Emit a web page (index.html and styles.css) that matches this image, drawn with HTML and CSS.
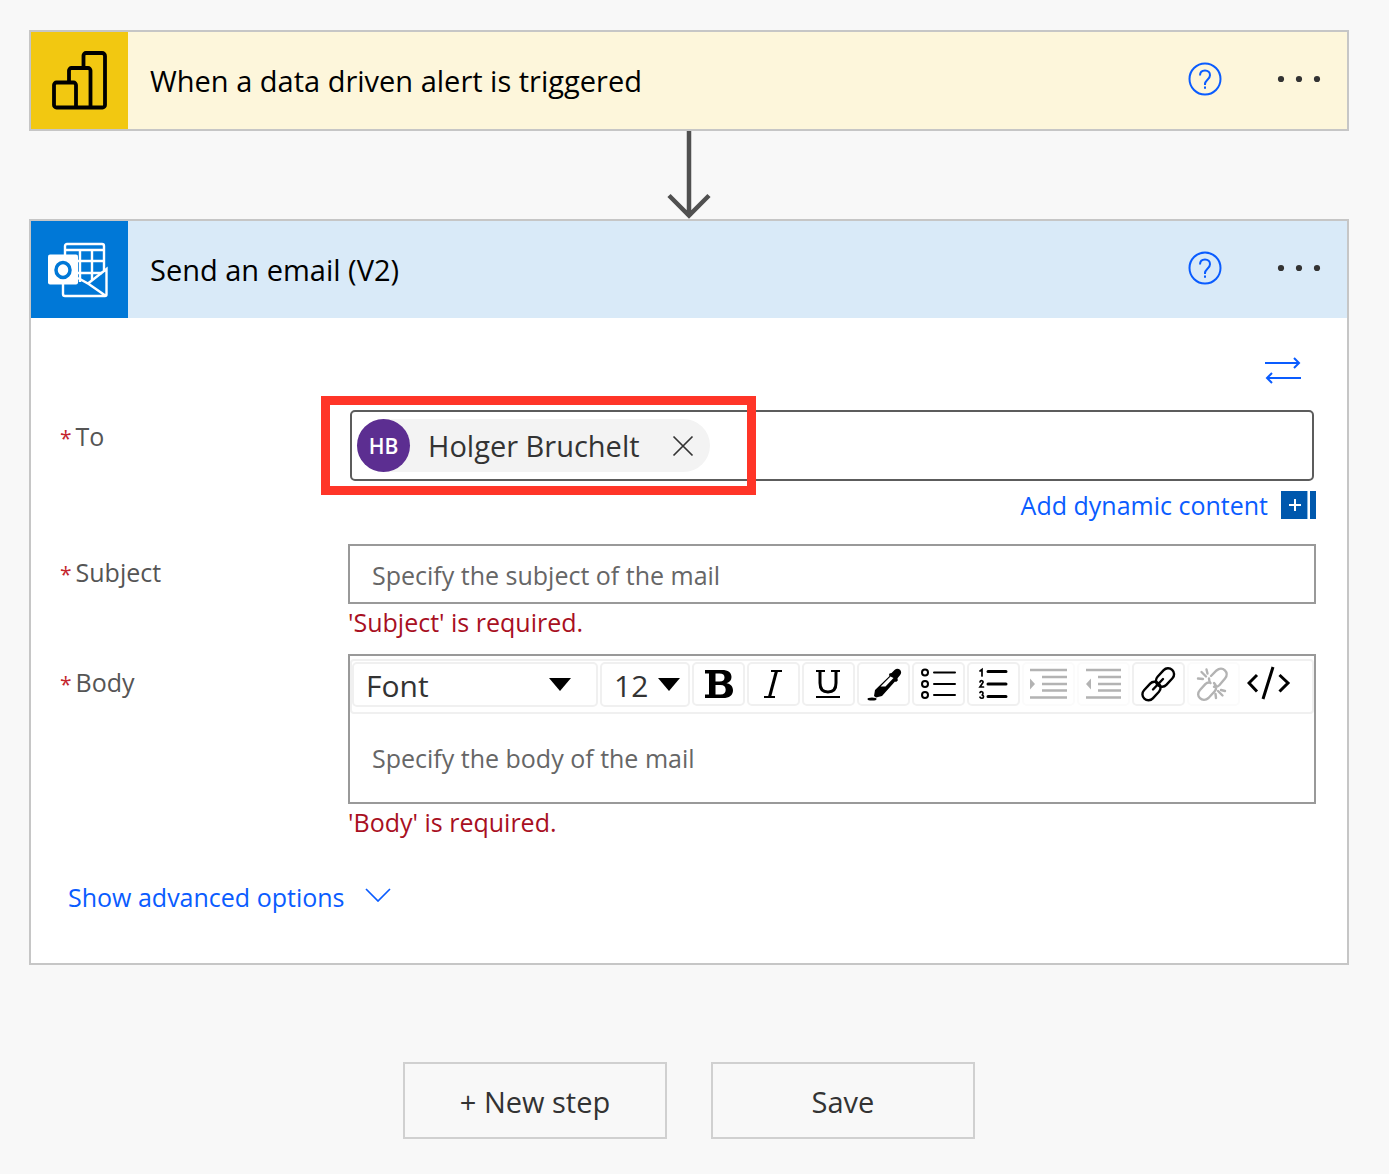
FILE: index.html
```html
<!DOCTYPE html>
<html lang="en">
<head>
<meta charset="utf-8">
<meta name="viewport" content="width=device-width, initial-scale=1">
<title>Flow designer</title>
<link rel="stylesheet" href="styles.css">
</head>
<body>
<main class="flow">
  <section class="card">
    <header class="card-header trigger">
      <span class="card-logo">
        <svg width="58" height="60" viewBox="0 0 58 60" fill="none" stroke="#000" stroke-width="3.800" aria-hidden="true">
          <path d="M32.500 15V4.500a2.500 2.500 0 0 1 2.500-2.500h16a3 3 0 0 1 3 3v49a2.500 2.500 0 0 1-2.500 2.500H5.500a2.500 2.500 0 0 1-2.500-2.500V34a2.500 2.500 0 0 1 2.500-2.500h17a2.500 2.500 0 0 1 2.500 2.500V56"/>
          <path d="M18 31V19.500a2.500 2.500 0 0 1 2.500-2.500h16.500a2.500 2.500 0 0 1 2.500 2.500V56"/>
        </svg>
      </span>
      <h2 class="card-title">When a data driven alert is triggered</h2>
      <button class="icon-button" type="button" aria-label="Help">
        <svg width="34" height="34" viewBox="0 0 34 34" fill="none" stroke="#0a5cff" stroke-width="2"><circle cx="17" cy="17" r="15.500"/><path d="M12 13.500c0-3 2-5 5-5s5 2 5 4.700c0 4.300-5 4.600-5 8.800v1"/><path d="M17 24.500v2.200"/></svg>
      </button>
      <button class="icon-button more" type="button" aria-label="More commands">
        <svg width="44" height="8" viewBox="0 0 44 8" fill="#333"><circle cx="4" cy="4" r="3.100"/><circle cx="22" cy="4" r="3.100"/><circle cx="40" cy="4" r="3.100"/></svg>
      </button>
    </header>
  </section>

  <svg class="connector" width="44" height="88" viewBox="0 0 44 88" fill="none" stroke="#505050" stroke-width="4.500" aria-hidden="true"><path d="M22 0v84M2 64.500l20 20 20-20"/></svg>

  <section class="card">
    <header class="card-header action">
      <span class="card-logo">
        <svg class="outlook" width="62" height="56" viewBox="0 0 62 56" fill="none" stroke="#fff" stroke-width="2.400" aria-hidden="true">
          <path d="M18 13V4a2 2 0 0 1 2-2h35a2 2 0 0 1 2 2v24M18 8h39M30 19h27M30 31h25M33 8v32M45 8v30"/>
          <path d="M16 41v11a2 2 0 0 0 2 2h40a1.500 1.500 0 0 0 1.500-1.500V27L41 41.500 31 36M41 41.500L59 54"/>
          <rect x="1" y="12.500" width="30" height="30" rx="2" fill="#fff" stroke="none"/>
          <ellipse cx="16" cy="28" rx="7" ry="7.500" stroke="#0078d7" stroke-width="3.500"/>
        </svg>
      </span>
      <h2 class="card-title">Send an email (V2)</h2>
      <button class="icon-button" type="button" aria-label="Help">
        <svg width="34" height="34" viewBox="0 0 34 34" fill="none" stroke="#0a5cff" stroke-width="2"><circle cx="17" cy="17" r="15.500"/><path d="M12 13.500c0-3 2-5 5-5s5 2 5 4.700c0 4.300-5 4.600-5 8.800v1"/><path d="M17 24.500v2.200"/></svg>
      </button>
      <button class="icon-button more" type="button" aria-label="More commands">
        <svg width="44" height="8" viewBox="0 0 44 8" fill="#333"><circle cx="4" cy="4" r="3.100"/><circle cx="22" cy="4" r="3.100"/><circle cx="40" cy="4" r="3.100"/></svg>
      </button>
    </header>

    <form class="card-body">
      <button class="icon-button switch" type="button" aria-label="Switch input mode">
        <svg width="38" height="28" viewBox="0 0 38 28" fill="none" stroke="#0a5cff" stroke-width="2"><path d="M1 7h34M30 2l5 5-5 5M37 22H3M8 17l-5 5 5 5"/></svg>
      </button>

      <div class="field to-field">
        <label class="label" for="to"><span class="star">*</span>To</label>
        <div class="control">
          <div class="people">
            <span class="person">
              <span class="avatar">HB</span>
              <span class="person-name">Holger Bruchelt</span>
              <button class="icon-button" type="button" aria-label="Remove Holger Bruchelt">
                <svg width="22" height="22" viewBox="0 0 22 22" fill="none" stroke="#333" stroke-width="1.700"><path d="M1.500 1.500l19 19M20.500 1.500l-19 19"/></svg>
              </button>
            </span>
            <input class="people-input" id="to" type="text">
          </div>
          <div class="highlight"></div>
          <a class="dynamic" href="#">Add dynamic content
            <svg width="35" height="28" viewBox="0 0 35 28" aria-hidden="true"><path fill="#0058ad" d="M0 0h26v28H0zM29 0h6v28h-6z"/><path fill="#8db9e0" d="M26 0h1v28h-1z"/><path d="M14 8v12M8 14h12" stroke="#fff" stroke-width="2"/></svg>
          </a>
        </div>
      </div>

      <div class="field subject-field">
        <label class="label" for="subject"><span class="star">*</span>Subject</label>
        <div class="control">
          <input class="text-input" id="subject" type="text" placeholder="Specify the subject of the mail">
          <p class="error">'Subject' is required.</p>
        </div>
      </div>

      <div class="field">
        <label class="label" for="body"><span class="star">*</span>Body</label>
        <div class="control">
          <div class="editor">
            <div class="toolbar">
              <span class="picker font-picker">
                <select class="picker-select" aria-label="Font"><option>Font</option></select>
                <svg class="caret" width="22" height="13" viewBox="0 0 22 13" aria-hidden="true"><path d="M0 0h22L11 13z"/></svg>
              </span>
              <span class="picker size-picker">
                <select class="picker-select" aria-label="Font size"><option>12</option></select>
                <svg class="caret" width="22" height="13" viewBox="0 0 22 13" aria-hidden="true"><path d="M0 0h22L11 13z"/></svg>
              </span>
              <button class="tool" type="button" aria-label="Bold">
                <svg width="44" height="40" viewBox="0 0 44 40"><path fill-rule="evenodd" d="M8 6h17c6 0 9.500 2.500 9.500 7 0 3.300-2 5.300-5 6.200 4 .7 6.500 3.200 6.500 7 0 5-3.700 7.800-10 7.800H8v-3.500h4v-21H8zM18.500 9.500v8h4c3.500 0 5-1.300 5-4s-1.500-4-5-4zM18.500 21v9.500h5c3.500 0 5.200-1.600 5.200-4.700S27 21 23.500 21z"/></svg>
              </button>
              <button class="tool" type="button" aria-label="Italic">
                <svg width="44" height="40" viewBox="0 0 44 40" fill="none" stroke="#000"><path stroke-width="2.200" d="M19 7h11M12 33h11"/><path stroke-width="3" d="M24.500 7l-7 26"/></svg>
              </button>
              <button class="tool" type="button" aria-label="Underline">
                <svg width="44" height="40" viewBox="0 0 44 40" fill="none" stroke="#000"><path stroke-width="2" d="M9 7h9M24 7h9M9 33h24"/><path stroke-width="3" d="M13 7v12c0 6 3 9 8 9s8-3 8-9V7"/></svg>
              </button>
              <button class="tool" type="button" aria-label="Text color">
                <svg width="44" height="40" viewBox="0 0 44 40"><path fill-rule="evenodd" d="M27.500 9.500l2-.5 3-3c2-1.800 4-1.600 5.500-.2s1.600 3.800 0 5.500l-2.500 3 .3 2.200-1.800 1.500-1-.5-13 14.500-6 1.500-2-1.500 1-6 14.500-14-.5-1zM28.500 12.500l-10 10h5l8-8.500z"/><ellipse cx="10" cy="35" rx="4.500" ry="1.500"/></svg>
              </button>
              <button class="tool" type="button" aria-label="Bulleted list">
                <svg width="44" height="40" viewBox="0 0 44 40" fill="none" stroke="#000" stroke-width="2"><circle cx="8" cy="8.500" r="3"/><circle cx="8" cy="20" r="3"/><circle cx="8" cy="31" r="3"/><path d="M17 8.500h21M17 20h21M17 31h21" stroke-linecap="round"/></svg>
              </button>
              <button class="tool" type="button" aria-label="Numbered list">
                <svg width="44" height="40" viewBox="0 0 44 40" fill="none" stroke="#000" stroke-linecap="round"><path stroke-width="3" d="M16 7.500h18M16 20h18M16 32.500h18"/><path stroke-width="1.700" d="M8 7l2-1.500V12M8 18c.5-2 3.500-1.500 3 .5L8 23h3.500M8 28.500c1-1.500 3-.8 3 .8 0 1-.8 1.700-1.500 1.700 1 0 2 .6 2 1.700 0 1.900-2.500 2-3.500.5"/></svg>
              </button>
              <button class="tool" type="button" aria-label="Indent" disabled>
                <svg width="44" height="40" viewBox="0 0 44 40"><path fill="none" stroke="#b3b3b3" stroke-width="2.400" d="M3 6h37M15 13h25M15 20h25M15 26.500h25M3 33.500h37"/><path fill="#b3b3b3" d="M3 14.500v11l5-5.500z"/></svg>
              </button>
              <button class="tool" type="button" aria-label="Outdent" disabled>
                <svg width="44" height="40" viewBox="0 0 44 40"><path fill="none" stroke="#b3b3b3" stroke-width="2.400" d="M4 6h35M16 13h23M16 20h23M16 26.500h23M4 33.500h35"/><path fill="#b3b3b3" d="M9 14.500v11L4 20z"/></svg>
              </button>
              <button class="tool" type="button" aria-label="Insert link">
                <svg width="44" height="40" viewBox="0 0 44 40" fill="none" stroke="#000" stroke-width="2.400" stroke-linecap="round"><rect x="-10.500" y="-6" width="21" height="12" rx="6" transform="translate(28 13.500) rotate(-47)"/><rect x="-10.500" y="-6" width="21" height="12" rx="6" transform="translate(14.500 27) rotate(-47)"/><path d="M16 25.500l10-10.500"/></svg>
              </button>
              <button class="tool" type="button" aria-label="Remove link" disabled>
                <svg width="44" height="40" viewBox="0 0 44 40" fill="none" stroke="#b3b3b3" stroke-width="2.400" stroke-linecap="round"><path d="M17 18.500c-1.500 0-2.500.5-3.700 1.700L8 26c-5.500 6 2.500 13 8.500 8l6-6.500c2.500-2.700 2.200-6-.5-8.500M19 12l5.500-5.500c6-5 13.500 2 8.500 8L27.500 21c-1.500 1.600-3.500 2.200-5.500 1.800M17 14.500c0 1.500.3 3 1.500 4.500M9.500 8l4.500 4.500M14.500 5.500l1 4M6 14.500l5 .5M26 27l4.500 4.500M29 26l4 1M23.500 30l.5 4"/></svg>
              </button>
              <button class="tool bare" type="button" aria-label="Code view">
                <svg width="44" height="40" viewBox="0 0 44 40" fill="none" stroke="#000" stroke-width="3"><path d="M10 11L2 19l8 8.500M32.500 11l8.500 8-8.500 8.500M26 3L16 35"/></svg>
              </button>
            </div>
            <textarea class="editor-text" id="body" placeholder="Specify the body of the mail"></textarea>
          </div>
          <p class="error">'Body' is required.</p>
        </div>
      </div>

      <button class="advanced" type="button">Show advanced options
        <svg class="chevron" width="26" height="14" viewBox="0 0 26 14" fill="none" stroke="#0a5cff" stroke-width="1.700" aria-hidden="true"><path d="M1 1l12 12L25 1"/></svg>
      </button>
    </form>
  </section>

  <div class="actions">
    <button class="action-button" type="button">+ New step</button>
    <button class="action-button" type="button">Save</button>
  </div>
</main>
</body>
</html>
```
FILE: styles.css
```css
* { box-sizing: border-box; }

body {
  margin: 0;
  background: #f8f8f8;
  color: #333;
  font-family: "Open Sans", "Noto Sans", sans-serif;
  font-size: 25px;
  line-height: 32px;
}

button, input, select, textarea { font: inherit; color: inherit; }
button { background: none; border: 0; padding: 0; cursor: pointer; }
svg { display: block; flex: none; }
h2, p { margin: 0; }

.flow {
  display: flex;
  flex-direction: column;
  padding: 30px 40px 36px 29px;
}

.card { border: 2px solid #c6c6c6; background: #fff; }

.card-header {
  display: flex;
  align-items: center;
  height: 97px;
  padding-right: 26px;
}
.card-header .icon-button { padding-bottom: 3px; }
.trigger { background: #fdf6db; }
.action { background: #d9eaf8; }

.card-logo {
  display: grid;
  place-items: center;
  width: 97px;
  height: 97px;
  flex: none;
}
.trigger .card-logo { background: #f2c811; }
.action .card-logo { background: #0078d7; }
.outlook { margin-right: 4px; }

.card-title {
  flex: 1;
  padding-left: 22px;
  color: #000;
  font-size: 29px;
  font-weight: 400;
  line-height: 40px;
}

.icon-button { display: grid; place-items: center; }
.more { margin-left: 55px; }
.connector { align-self: center; }

.card-body { padding: 38px 31px 50px 29px; }
.switch { margin: 0 14px 26px auto; }

.field {
  display: grid;
  grid-template-columns: 288px minmax(0, 1fr);
}
.label { padding-top: 12px; color: #555; }
.to-field .label { padding-top: 10px; }
.star { margin-right: 4px; color: #c4262e; font-size: 21px; }
.control { position: relative; }

.people {
  display: flex;
  align-items: center;
  height: 71px;
  margin: 0 2px;
  padding: 0 5px;
  border: 2px solid #5c5c5c;
  border-radius: 5px;
}
.person {
  display: flex;
  align-items: center;
  height: 53px;
  padding-right: 16px;
  border-radius: 27px;
  background: #f3f3f3;
}
.avatar {
  display: grid;
  place-items: center;
  width: 53px;
  height: 53px;
  border-radius: 50%;
  background: #5c2e91;
  color: #fff;
  font-size: 21px;
  font-weight: 600;
}
.person-name { margin: 0 32px 0 18px; font-size: 29px; }
.people-input {
  flex: 1;
  min-width: 0;
  height: 53px;
  border: 0;
  outline: 0;
  background: none;
}
/* marks the recipient, drawn over the picker */
.highlight {
  position: absolute;
  top: -14px;
  left: -27px;
  width: 435px;
  height: 99px;
  border: 9px solid #ff3528;
  pointer-events: none;
}

.dynamic {
  display: flex;
  justify-content: flex-end;
  align-items: center;
  gap: 13px;
  margin-top: 8px;
  color: #0a5cff;
  text-decoration: none;
}

.subject-field { margin: 23px 0 16px; }
.text-input {
  display: block;
  width: 100%;
  height: 60px;
  padding: 2px 22px 0;
  border: 2px solid #999;
  background: #fff;
}
::placeholder { color: #666; opacity: 1; }
.error { padding-top: 2px; color: #a80f22; }

.editor { border: 2px solid #999; padding-top: 3px; }
.toolbar {
  display: flex;
  gap: 2px;
  height: 55px;
  padding-top: 1px;
  border: 2px solid #f0f0f0;
  border-radius: 4px;
}
.picker {
  display: grid;
  align-items: center;
  height: 45px;
  border: 2px solid #f0f0f0;
  border-radius: 5px;
}
.font-picker { width: 246px; }
.size-picker { width: 90px; }
.picker-select {
  grid-area: 1 / 1;
  width: 100%;
  height: 41px;
  padding: 1px 0 0 12px;
  border: 0;
  background: none;
  appearance: none;
  font-size: 30px;
  line-height: 39px;
}
.caret { grid-area: 1 / 1; justify-self: end; pointer-events: none; }
.font-picker .caret { margin-right: 25px; }
.size-picker .caret { margin-right: 8px; }

.tool {
  display: grid;
  place-items: center;
  width: 53px;
  height: 44px;
  border: 2px solid #f0f0f0;
  border-radius: 5px;
}
.tool:disabled { border-color: #fbfbfb; }
.bare { border-color: transparent; }

.editor-text {
  display: block;
  width: 100%;
  height: 88px;
  padding: 28px 22px 0;
  border: 0;
  outline: 0;
  resize: none;
  background: none;
}

.advanced {
  display: flex;
  align-items: center;
  gap: 20px;
  margin: 43px 0 0 8px;
  color: #0a5cff;
}
.chevron { margin-bottom: 4px; }

.actions {
  display: flex;
  justify-content: center;
  gap: 44px;
  margin-top: 97px;
}
.action-button {
  width: 264px;
  height: 77px;
  padding-top: 2px;
  border: 2px solid #d0d0d0;
  font-size: 29px;
}
```
